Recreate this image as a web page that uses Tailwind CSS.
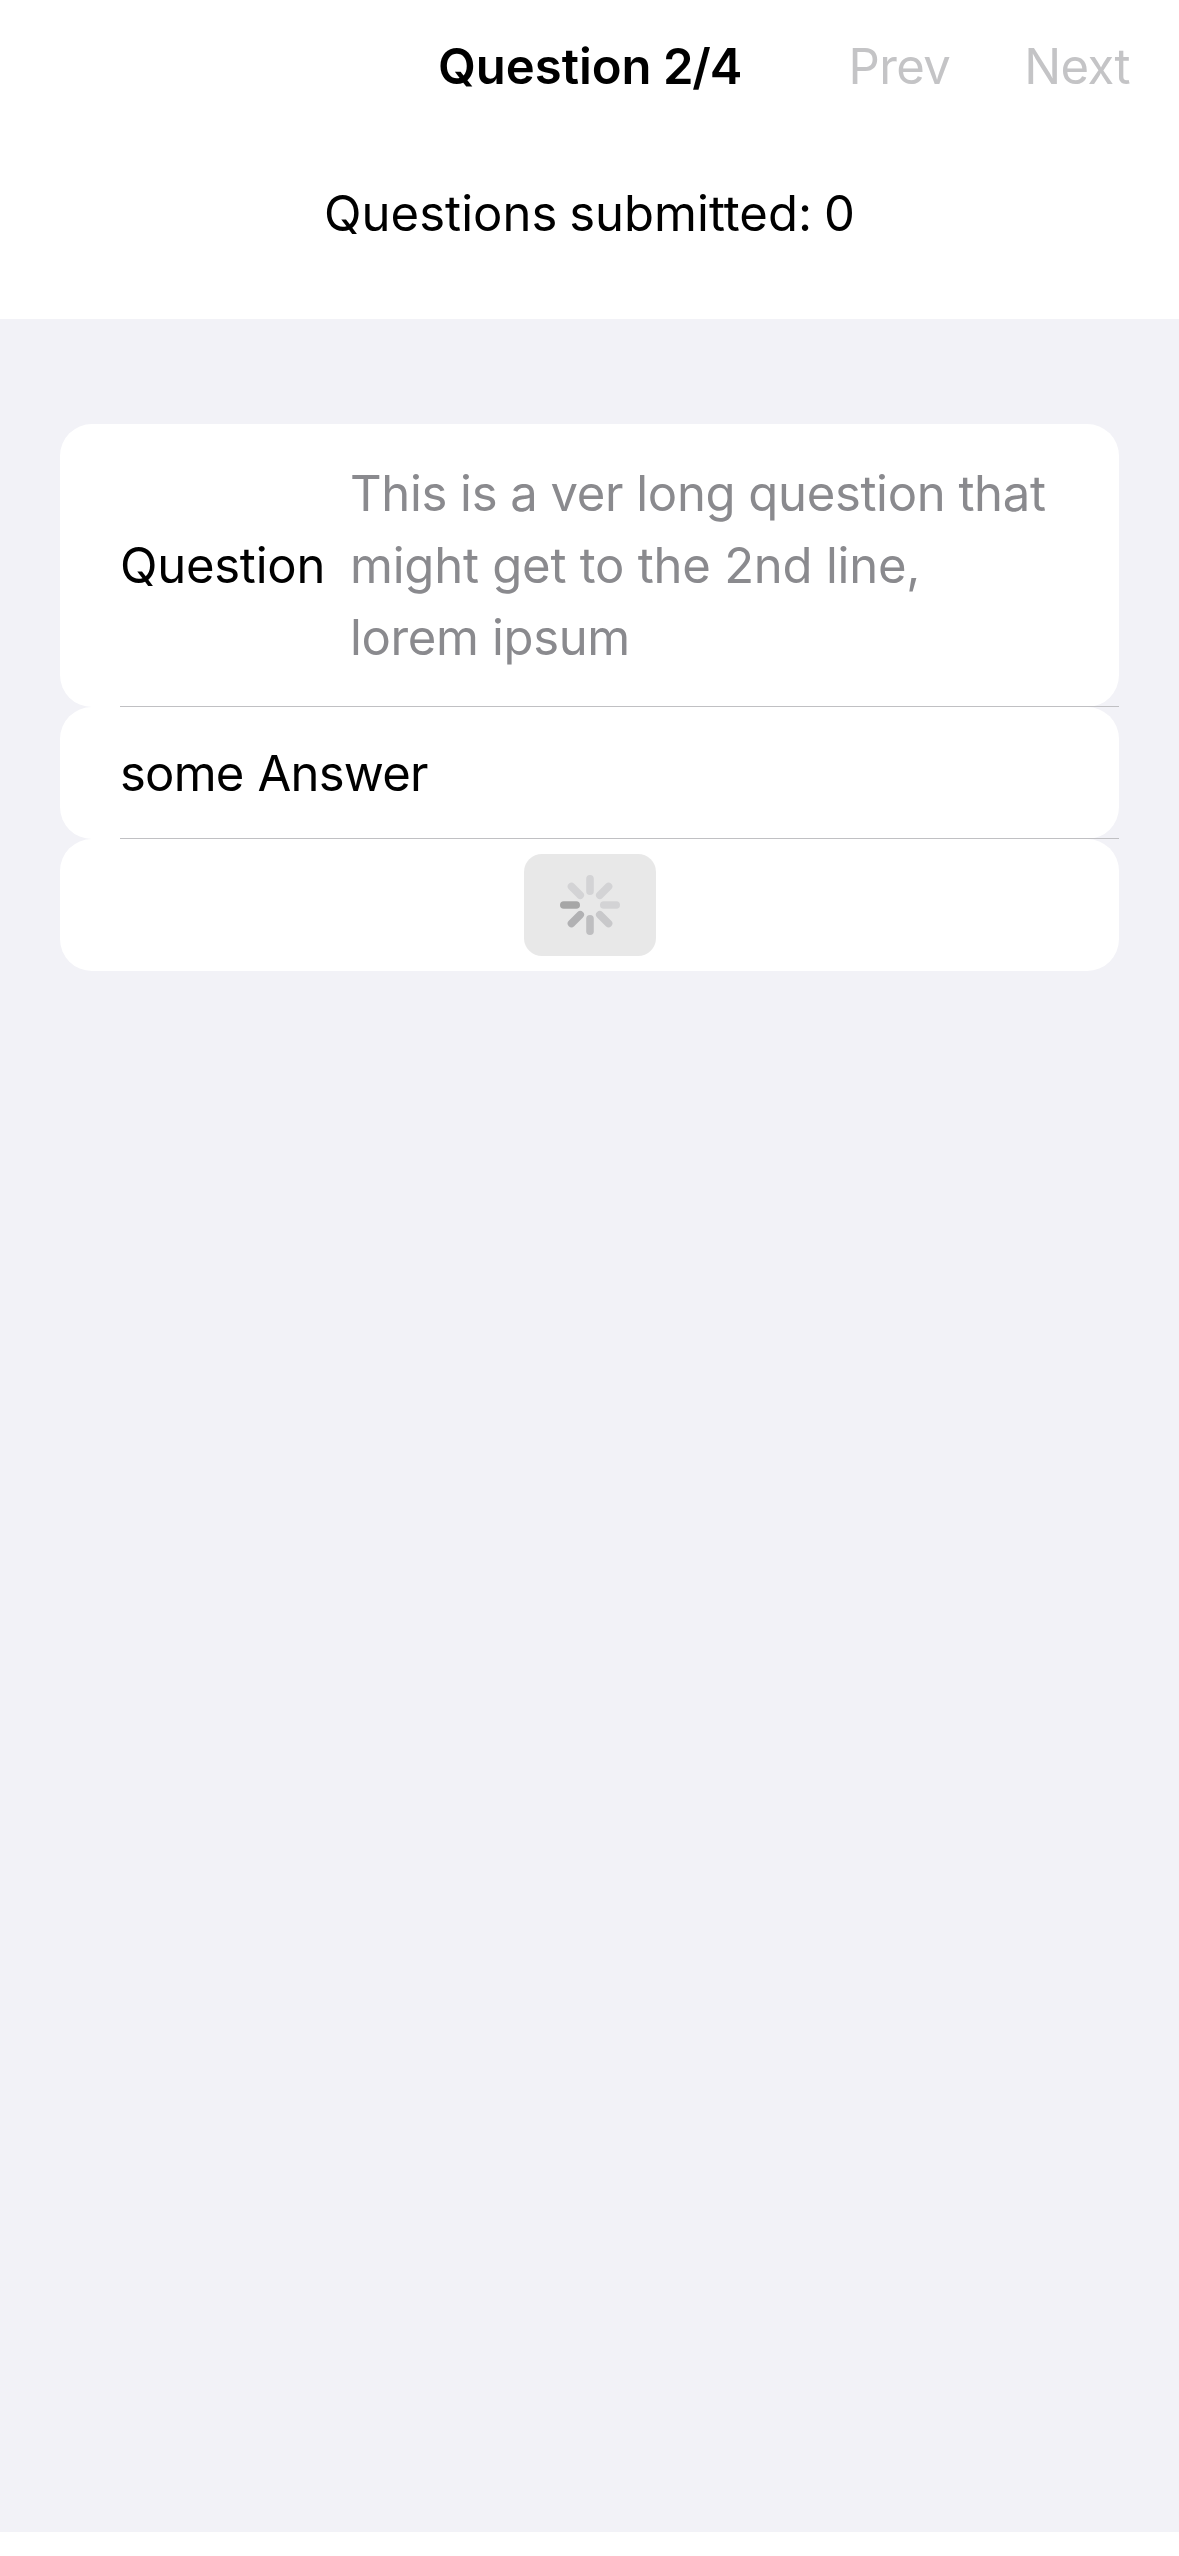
<!DOCTYPE html>
<html lang="en">
<head>
<meta charset="utf-8">
<title>Question 2/4</title>
<script src="https://cdn.jsdelivr.net/npm/@tailwindcss/browser@4"></script>
</head>
<body class="flex h-[2556px] w-[1179px] flex-col overflow-hidden bg-white font-['Inter',sans-serif] text-[49px] leading-[72px] text-black">
  <header class="grid h-[134px] shrink-0 grid-cols-[1fr_auto_1fr] items-center whitespace-nowrap">
    <h1 class="col-start-2 font-semibold">Question <span class="-ml-[1px] tracking-[-1.2px]">2/4</span></h1>
    <nav class="flex justify-end gap-[74px] pr-[49px] text-[#c4c4c6]">
      <button class="tracking-[-0.6px]">Prev</button>
      <button class="tracking-[-0.6px]">Next</button>
    </nav>
  </header>
  <p class="h-[185px] shrink-0 pt-[44px] text-center tracking-[0.03px] [word-spacing:-2px]">Questions submitted: 0</p>

  <main class="h-[2213px] shrink-0 bg-[#f2f2f7] px-[60px] pt-[105px]">
    <section class="relative flex h-[283px] items-center rounded-[32px] bg-white pl-[60px]">
      <span class="w-[230px] tracking-[-0.25px]">Question</span>
      <p class="whitespace-nowrap text-[#8a8a8e]">
        <span class="block tracking-[-0.34px] [word-spacing:-0.3px]">This is a ver long question that</span>
        <span class="block tracking-[-0.23px]">might get to the 2nd line,</span>
        <span class="block tracking-[-0.35px]">lorem ipsum</span>
      </p>
      <div class="absolute right-0 bottom-0 left-[60px] h-px bg-[#c0c0c3]"></div>
    </section>
    <section class="relative flex h-[132px] items-center rounded-[32px] bg-white pt-[2px] pl-[60px]">
      <span class="tracking-[-0.8px] [word-spacing:1px]">some Answer</span>
      <div class="absolute right-0 bottom-0 left-[60px] h-px bg-[#c0c0c3]"></div>
    </section>
    <section class="flex h-[132px] items-center justify-center rounded-[32px] bg-white">
      <div class="flex h-[102px] w-[132px] items-center justify-center rounded-[18px] bg-[#e8e8e8]">
        <svg class="size-[60px]" viewBox="-30 -30 60 60" fill="none" stroke-width="7.6" stroke-linecap="round">
          <path stroke="#d3d3d5" d="M0-26.2V-13.8M9.76-9.76 18.53-18.53M13.8 0H26.2M-9.76-9.76-18.53-18.53"/>
          <path stroke="#c8c8ca" d="M9.76 9.76 18.53 18.53"/>
          <path stroke="#bebec0" d="M0 13.8V26.2"/>
          <path stroke="#b1b1b3" d="M-9.76 9.76-18.53 18.53"/>
          <path stroke="#a6a6a6" d="M-13.8 0H-26.2"/>
        </svg>
      </div>
    </section>
  </main>
</body>
</html>
